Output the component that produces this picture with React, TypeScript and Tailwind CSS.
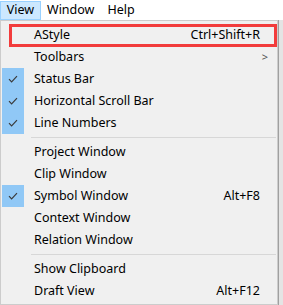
import React from 'react';

type Item =
  | { kind: 'sep' }
  | { kind: 'item'; label: string; shortcut?: string; checked?: boolean; submenu?: boolean; marked?: boolean };

const ITEMS: Item[] = [
  { kind: 'item', label: 'AStyle', shortcut: 'Ctrl+Shift+R', marked: true },
  { kind: 'item', label: 'Toolbars', submenu: true },
  { kind: 'item', label: 'Status Bar', checked: true },
  { kind: 'item', label: 'Horizontal Scroll Bar', checked: true },
  { kind: 'item', label: 'Line Numbers', checked: true },
  { kind: 'sep' },
  { kind: 'item', label: 'Project Window' },
  { kind: 'item', label: 'Clip Window' },
  { kind: 'item', label: 'Symbol Window', shortcut: 'Alt+F8', checked: true },
  { kind: 'item', label: 'Context Window' },
  { kind: 'item', label: 'Relation Window' },
  { kind: 'sep' },
  { kind: 'item', label: 'Show Clipboard' },
  { kind: 'item', label: 'Draft View', shortcut: 'Alt+F12' },
];

const CheckMark = () => (
  <svg width="10" height="8" viewBox="0 0 10 8" fill="none">
    <path d="M1 4.2 L3.6 6.8 L9 1.2" stroke="#3a3a3a" strokeWidth="1.2" />
  </svg>
);

const App: React.FC = () => {
  return (
    <div
      className="relative w-[283px] h-[305px] overflow-hidden bg-white text-[12.5px] text-black"
      style={{ fontFamily: '"Noto Sans", "Open Sans", sans-serif' }}
    >
      {/* Menu bar */}
      <div className="flex h-[20px] items-center bg-white">
        <div className="flex h-[19px] w-[41px] items-center justify-center border border-[#99d1ff] bg-[#cce8ff]">View</div>
        <div className="ml-[6px]">Window</div>
        <div className="ml-[13px]">Help</div>
      </div>

      <div className="flex">
        {/* Dropdown */}
        <div className="w-[278px] border border-[#cccccc] bg-[#f0f0f0] pt-[3px] pb-[2px]">
          {ITEMS.map((item, i) =>
            item.kind === 'sep' ? (
              <div key={i} className="flex h-[7px] items-center pl-[30px] pr-[1px]">
                <div className="h-px w-full bg-[#d7d7d7]" />
              </div>
            ) : (
              <div key={i} className="relative flex h-[22px] items-center">
                <div className="ml-[1px] flex h-full w-[22px] items-center justify-center">
                  {item.checked && (
                    <div className="flex h-full w-full items-center justify-center bg-[#90c8f6]">
                      <CheckMark />
                    </div>
                  )}
                </div>
                <span className="ml-[10px] flex-1">{item.label}</span>
                {item.shortcut && <span className="mr-[17px]">{item.shortcut}</span>}
                {item.submenu && <span className="mr-[9px] text-[11px] text-[#555]">&gt;</span>}
                {item.marked && (
                  <div className="pointer-events-none absolute left-[8px] right-0 top-[0px] bottom-[-1px] border-[3px] border-[#f23c3c]" />
                )}
              </div>
            )
          )}
        </div>
        {/* Background window edge */}
        <div className="flex flex-1">
          <div className="w-px bg-[#a0a0a0]" />
          <div className="flex-1 bg-[#e4e4e4]" />
        </div>
      </div>
    </div>
  );
};

export default App;
